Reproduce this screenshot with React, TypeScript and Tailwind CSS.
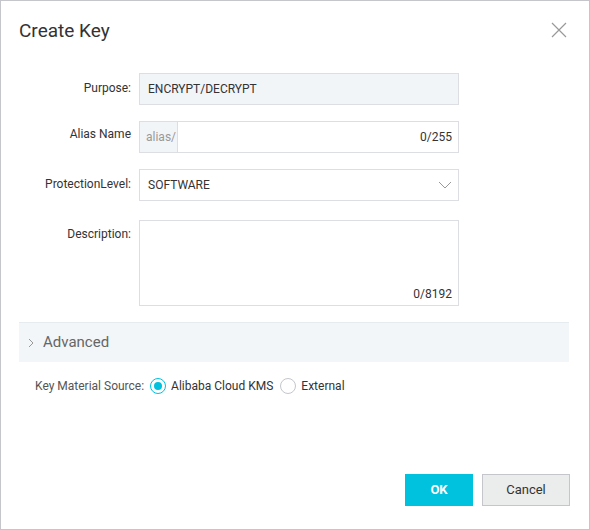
import React from "react";

export default function App() {
  return (
    <div className="w-[590px] h-[530px] bg-white border border-[#c4c6cc] relative text-[#333] text-[12px]" style={{ fontFamily: 'Roboto, "Liberation Sans", Arial, sans-serif' }}>
      <div className="flex items-center justify-between pl-[18px] pr-[22px] pt-[19px] h-[41px]">
        <div className="text-[19px] text-[#333] leading-[22px]">Create Key</div>
        <svg width="16" height="16" viewBox="0 0 16 16" className="mt-[-2px]">
          <path d="M1 1 L15 15 M15 1 L1 15" stroke="#999" strokeWidth="1.2" fill="none" />
        </svg>
      </div>

      <div className="mt-[31px] flex flex-col">
        {/* Purpose */}
        <div className="flex h-[32px]">
          <div className="w-[130px] text-right pt-[7px] leading-[16px] text-[#333]">Purpose:</div>
          <div className="ml-[8px] w-[320px] h-[32px] border border-[#dcdee3] bg-[#f2f5f8] flex items-center px-[8px] text-[#333]">ENCRYPT/DECRYPT</div>
        </div>
        {/* Alias */}
        <div className="flex h-[32px] mt-[16px]">
          <div className="w-[130px] text-right pt-[5px] leading-[16px] text-[#333]">Alias Name</div>
          <div className="ml-[8px] w-[320px] h-[32px] border border-[#dcdee3] bg-white flex items-stretch">
            <div className="w-[38px] bg-[#f2f5f8] border-r border-[#dcdee3] flex items-center pl-[6px] text-[#999]">alias/</div>
            <div className="flex-1 flex items-center justify-end pr-[6px] text-[#333]">0/255</div>
          </div>
        </div>
        {/* Protection */}
        <div className="flex h-[32px] mt-[16px]">
          <div className="w-[130px] text-right pt-[7px] leading-[16px] text-[#333]">ProtectionLevel:</div>
          <div className="ml-[8px] w-[320px] h-[32px] border border-[#dcdee3] bg-white flex items-center justify-between pl-[8px] pr-[6px] text-[#333]">
            <span>SOFTWARE</span>
            <svg width="14" height="10" viewBox="0 0 14 10">
              <path d="M1 2 L7 8 L13 2" stroke="#999" strokeWidth="1" fill="none" />
            </svg>
          </div>
        </div>
        {/* Description */}
        <div className="flex mt-[19px]">
          <div className="w-[130px] text-right pt-[6px] leading-[16px] text-[#333]">Description:</div>
          <div className="ml-[8px] w-[320px] h-[86px] border border-[#dcdee3] bg-white flex items-end justify-end pr-[6px] pb-[2px] text-[#333]">0/8192</div>
        </div>
      </div>

      {/* Advanced */}
      <div className="ml-[18px] mr-[20px] mt-[16px] h-[40px] bg-[#f2f6f9] border-t border-[#e6ebef] flex items-center">
        <svg width="8" height="10" viewBox="0 0 8 10" className="ml-[8px]">
          <path d="M2 1 L6 5 L2 9" stroke="#999" strokeWidth="1" fill="none" />
        </svg>
        <span className="ml-[8px] text-[15px] text-[#666]">Advanced</span>
      </div>

      {/* Key material */}
      <div className="flex items-center mt-[15px] pl-[34px] h-[18px]">
        <span className="text-[#555]">Key Material Source:</span>
        <span className="ml-[6px] w-[16px] h-[16px] rounded-full border border-[#00c1de] flex items-center justify-center">
          <span className="w-[8px] h-[8px] rounded-full bg-[#00c1de]" />
        </span>
        <span className="ml-[5px] text-[#333]">Alibaba Cloud KMS</span>
        <span className="ml-[7px] w-[16px] h-[16px] rounded-full border border-[#c4c6cc] bg-white" />
        <span className="ml-[5px] text-[#333]">External</span>
      </div>

      {/* Buttons */}
      <div className="absolute right-[19px] bottom-[23px] flex gap-[9px]">
        <button className="w-[68px] h-[32px] bg-[#00c1de] text-white font-bold text-[13px]">OK</button>
        <button className="w-[88px] h-[32px] bg-[#ebecec] border border-[#c4c6cc] text-[#333] text-[13px]">Cancel</button>
      </div>
    </div>
  );
}
